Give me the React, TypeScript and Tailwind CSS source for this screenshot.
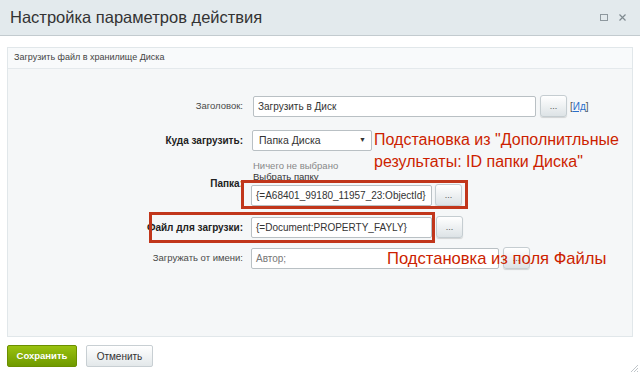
import React from 'react';

const font = { fontFamily: '"Liberation Sans", Arial, sans-serif' };

const DotsButton: React.FC<{ className?: string }> = ({ className = '' }) => (
  <button
    className={`h-[22px] w-[27px] shrink-0 rounded-[3px] border border-[#c5cdd1] bg-gradient-to-b from-[#ffffff] to-[#dde3e6] text-[9px] leading-none text-[#555] shadow-[0_1px_1px_rgba(0,0,0,0.15)] ${className}`}
  >
    ...
  </button>
);

const TextInput: React.FC<{ value: string; className?: string; muted?: boolean }> = ({
  value,
  className = '',
  muted,
}) => (
  <div
    className={`flex h-[21px] shrink-0 items-center overflow-hidden whitespace-nowrap rounded-[2px] border border-[#b9c0c4] bg-white px-[4px] text-[10px] ${
      muted ? 'text-[#777]' : 'text-[#333]'
    } ${className}`}
  >
    {value}
  </div>
);

const Label: React.FC<{ children: React.ReactNode; bold?: boolean }> = ({ children, bold }) => (
  <div
    className={`w-[236px] shrink-0 pr-[1px] text-right ${
      bold ? 'text-[10px] font-bold text-[#222]' : 'text-[9.5px] text-[#4a4a4a]'
    }`}
  >
    {children}
  </div>
);

export default function App() {
  return (
    <div className="relative h-[374px] w-[640px] overflow-hidden bg-white" style={font}>
      {/* title bar */}
      <div className="flex h-[36px] items-center justify-between border-b border-[#c3cbcf] bg-[#e3eaed] pl-[10px] pr-[14px]">
        <div className="text-[16.5px] text-[#333]">Настройка параметров действия</div>
        <div className="flex items-center gap-[11px]">
          <span className="block h-[7px] w-[8px] border border-[#8e989e]" />
          <svg width="7" height="7" viewBox="0 0 7 7">
            <path d="M0.5 0.5 L6.5 6.5 M6.5 0.5 L0.5 6.5" stroke="#7f8a90" strokeWidth="1.2" />
          </svg>
        </div>
      </div>

      {/* panel */}
      <div className="ml-[7px] mt-[11px] w-[626px] border border-[#e1e7ea]">
        <div className="flex h-[21px] items-center border-b border-[#e4e9ec] bg-[#f8fafb] px-[6px] text-[9px] text-[#444]">
          Загрузить файл в хранилище Диска
        </div>
        <div className="relative flex h-[267px] flex-col bg-[#f5f7f8] pt-[26px]">
          {/* Заголовок */}
          <div className="flex items-center">
            <Label>Заголовок:</Label>
            <TextInput value="Загрузить в Диск" className="ml-[9px] w-[283px]" />
            <DotsButton className="ml-[4px]" />
            <span className="ml-[3px] text-[10px] text-[#555]">
              [<span className="text-[#2a6fc9] underline">Ид</span>]
            </span>
          </div>

          {/* Куда загрузить */}
          <div className="mt-[13px] flex items-center">
            <Label bold>Куда загрузить:</Label>
            <div className="ml-[8px] flex h-[21px] w-[120px] items-center justify-between rounded-[2px] border border-[#b9c0c4] bg-white pl-[6px] pr-[5px] text-[10.5px] text-[#333]">
              <span>Папка Диска</span>
              <span className="text-[7px] text-[#333]">▼</span>
            </div>
          </div>

          {/* Папка */}
          <div className="mt-[9px] flex items-center">
            <Label bold>Папка:</Label>
            <div className="ml-[7px] flex flex-col">
              <div className="pl-[2px] text-[9.5px] leading-[11px] text-[#888]">Ничего не выбрано</div>
              <div className="pl-[2px] text-[9.5px] leading-[11px] text-[#333] underline">Выбрать папку</div>
              <div className="mt-[2px] flex items-center gap-[3px]">
                <TextInput value="{=A68401_99180_11957_23:ObjectId}" className="w-[181px]" />
                <DotsButton />
              </div>
            </div>
          </div>

          {/* Файл для загрузки */}
          <div className="mt-[10px] flex items-center">
            <Label bold>Файл для загрузки:</Label>
            <TextInput value="{=Document:PROPERTY_FAYLY}" className="ml-[7px] w-[181px]" />
            <DotsButton className="ml-[4px]" />
          </div>

          {/* Загружать от имени */}
          <div className="mt-[9px] flex items-center">
            <Label>Загружать от имени:</Label>
            <TextInput value="Автор;" muted className="ml-[7px] w-[248px]" />
            <DotsButton className="ml-[4px]" />
          </div>

          {/* annotations */}
          <div className="pointer-events-none absolute left-[233px] top-[111px] h-[29px] w-[227px] border-[3px] border-[#c1361b]" />
          <div className="pointer-events-none absolute left-[141px] top-[143px] h-[31px] w-[286px] border-[3px] border-[#c1361b]" />
          <div className="pointer-events-none absolute left-[366px] top-[60px] text-[16px] leading-[22px] text-[#cc1f00]">
            Подстановка из "Дополнитльные
            <br />
            результаты: ID папки Диска"
          </div>
          <div className="pointer-events-none absolute left-[379px] top-[180px] text-[16.6px] leading-[20px] text-[#cc1f00]">
            Подстановка из поля Файлы
          </div>
        </div>
      </div>

      {/* footer buttons */}
      <div className="ml-[7px] mt-[8px] flex gap-[9px]">
        <button className="h-[22px] w-[70px] rounded-[2px] border border-[#6b8f00] bg-gradient-to-b from-[#9ac20f] to-[#6f9a00] text-[9.5px] font-bold text-white">
          Сохранить
        </button>
        <button className="h-[22px] w-[67px] rounded-[2px] border border-[#c8cfd3] bg-gradient-to-b from-[#ffffff] to-[#e3e8ea] text-[10px] text-[#333]">
          Отменить
        </button>
      </div>

      {/* resize grip */}
      <svg className="absolute bottom-[1px] right-[1px]" width="10" height="10" viewBox="0 0 10 10">
        <path d="M9 2 L2 9 M9 5 L5 9 M9 8 L8 9" stroke="#b0b8bc" strokeWidth="0.8" />
      </svg>
    </div>
  );
}
